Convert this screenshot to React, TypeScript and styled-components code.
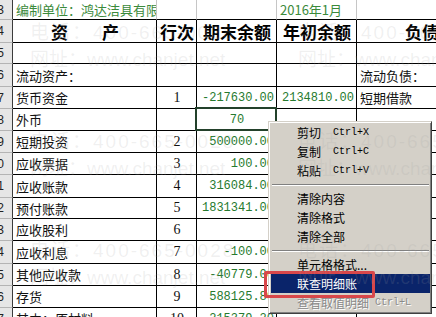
import React from 'react';
import styled, { createGlobalStyle, css } from 'styled-components';

const GlobalStyle = createGlobalStyle`
  html, body {
    margin: 0;
    padding: 0;
    background: #fff;
    overflow: hidden;
  }
  body {
    font-family: "Noto Sans CJK SC", "Liberation Sans", sans-serif;
  }
`;

type Align = 'left' | 'center' | 'right';
type Tone = 'text' | 'head' | 'num' | 'seq' | 'title';

interface Entry {
  label: string;
  seq?: string;
  end?: string;
  begin?: string;
  right?: string;
  selected?: boolean;
}

const ROW_HEIGHTS = [20, 23, 21, 23, 22, 22, 22, 22, 23, 21, 22, 23, 22, 22, 22];

const ENTRIES: Entry[] = [
  { label: '流动资产：', right: '流动负债：' },
  { label: '货币资金', seq: '1', end: '-217630.00', begin: '2134810.00', right: '短期借款' },
  { label: '外币', end: '70', selected: true },
  { label: '短期投资', seq: '2', end: '500000.00' },
  { label: '应收票据', seq: '3', end: '100.00' },
  { label: '应收账款', seq: '4', end: '316084.00' },
  { label: '预付账款', seq: '5', end: '1831341.00' },
  { label: '应收股利', seq: '6' },
  { label: '应收利息', seq: '7', end: '-100.00' },
  { label: '其他应收款', seq: '8', end: '-40779.00' },
  { label: '存货', seq: '9', end: '588125.80' },
  { label: '其中：原材料', seq: '10', end: '215379.20' },
];

const MENU = [
  { label: '剪切', key: 'Ctrl+X', gap: 12 },
  { label: '复制', key: 'Ctrl+C', gap: 12 },
  { label: '粘贴', key: 'Ctrl+V', gap: 12 },
  { sep: true },
  { label: '清除内容' },
  { label: '清除格式' },
  { label: '清除全部' },
  { sep: true },
  { label: '单元格格式...' },
  { label: '联查明细账', active: true },
  { label: '查看取值明细', key: 'Ctrl+L', gap: 6, disabled: true },
];

const WATERMARKS = [19, 128, 237].flatMap((y) => [30, 298].map((x) => ({ x, y })));

const Screen = styled.div`
  position: relative;
  width: 436px;
  height: 317px;
  overflow: hidden;
  background: #fff;
`;

const Sheet = styled.div`
  display: flex;
  flex-direction: column;
  width: 487px;
`;

const Row = styled.div<{ $h: number }>`
  display: grid;
  grid-template-columns: 13px 144px 40px 80px 80px 130px;
  height: ${(p) => p.$h}px;
`;

const RowHead = styled.div`
  box-sizing: border-box;
  display: flex;
  align-items: center;
  justify-content: flex-end;
  padding-right: 8px;
  overflow: hidden;
  white-space: nowrap;
  background: #e6e6e6;
  border-right: 1px solid #3c3c3c;
  border-bottom: 1px solid #b4b4b4;
  font: 12px "Liberation Sans", sans-serif;
  color: #222;
`;

const toneStyles = {
  text: css`
    font-size: 13px;
    color: #111;
  `,
  head: css`
    font-size: 17px;
    font-weight: 700;
    color: #000;
  `,
  num: css`
    font: 12px "Liberation Mono", monospace;
    color: #267a2e;
  `,
  seq: css`
    font: 14px "Liberation Serif", serif;
    color: #111;
  `,
  title: css`
    font-size: 13px;
    color: #3b8a3b;
  `,
};

const justify = { left: 'flex-start', center: 'center', right: 'flex-end' };

const Cell = styled.div<{ $align?: Align; $tone?: Tone; $soft?: boolean; $selected?: boolean }>`
  box-sizing: border-box;
  position: relative;
  display: flex;
  align-items: center;
  justify-content: ${(p) => justify[p.$align || 'left']};
  padding: 0 2px 0 3px;
  white-space: nowrap;
  overflow: ${(p) => (p.$selected ? 'visible' : 'hidden')};
  border-right: 1px solid ${(p) => (p.$soft ? '#c6c6c6' : '#000')};
  border-bottom: 1px solid #000;
  ${(p) => toneStyles[p.$tone || 'text']}

  ${(p) =>
    p.$selected &&
    css`
      &::after {
        content: '';
        position: absolute;
        top: -2px;
        left: -2px;
        right: -1px;
        bottom: -1px;
        border: 2px solid #23412b;
        z-index: 1;
      }
    `}
`;

const Menu = styled.div`
  position: absolute;
  left: 268px;
  top: 121px;
  width: 164px;
  box-sizing: border-box;
  padding: 1px 1px 1px 2px;
  background: #d4d0c8;
  border: 1px solid;
  border-color: #d4d0c8 #404040 #404040 #d4d0c8;
  box-shadow: inset 1px 1px 0 #fff, inset -1px -1px 0 #808080;
  font: 12px "Noto Sans CJK SC", sans-serif;
  z-index: 2;
`;

const MenuItem = styled.div<{ $active?: boolean; $disabled?: boolean }>`
  display: flex;
  align-items: center;
  height: 19px;
  padding-left: 26px;
  white-space: nowrap;
  color: #000;
  ${(p) =>
    p.$active &&
    css`
      background: #0a246a;
      color: #fff;
    `}
  ${(p) =>
    p.$disabled &&
    css`
      color: #8a8a8a;
      text-shadow: 1px 1px 0 #fff;
    `}
`;

const Shortcut = styled.span<{ $gap: number }>`
  margin-left: ${(p) => p.$gap}px;
  font: 10px "Liberation Mono", monospace;
`;

const Separator = styled.div`
  height: 0;
  margin: 4px 1px 3px;
  border-top: 1px solid #808080;
  border-bottom: 1px solid #fff;
`;

const Callout = styled.div`
  position: absolute;
  left: 264px;
  top: 271px;
  width: 111px;
  height: 27px;
  box-sizing: border-box;
  border: 3px solid #d8474a;
  border-radius: 2px;
  z-index: 3;
`;

const Watermark = styled.div`
  position: absolute;
  inset: 0;
  pointer-events: none;
  z-index: 4;
`;

const Mark = styled.div`
  position: absolute;
  font-family: "Liberation Sans", "Noto Sans CJK SC", sans-serif;
  font-size: 19px;
  line-height: 27px;
  white-space: nowrap;
  color: rgba(160, 160, 160, 0.16);
`;

const MarkLine = styled.div<{ $spacing: number }>`
  letter-spacing: ${(p) => p.$spacing}px;
`;

const App = () => (
  <Screen>
    <GlobalStyle />
    <Sheet>
      <Row $h={ROW_HEIGHTS[0]}>
        <RowHead>3</RowHead>
        <Cell $soft $tone="title">编制单位：鸿达洁具有限公司</Cell>
        <Cell $soft />
        <Cell $soft />
        <Cell $soft $tone="title">2016年1月</Cell>
        <Cell $soft />
      </Row>
      <Row $h={ROW_HEIGHTS[1]}>
        <RowHead>4</RowHead>
        <Cell $tone="head" $align="center">资　　产</Cell>
        <Cell $tone="head" $align="center">行次</Cell>
        <Cell $tone="head" $align="center">期末余额</Cell>
        <Cell $tone="head" $align="center">年初余额</Cell>
        <Cell $tone="head" $align="center">负债</Cell>
      </Row>
      <Row $h={ROW_HEIGHTS[2]}>
        <RowHead>5</RowHead>
        <Cell />
        <Cell />
        <Cell />
        <Cell />
        <Cell />
      </Row>
      {ENTRIES.map((e, i) => (
        <Row key={e.label} $h={ROW_HEIGHTS[i + 3]}>
          <RowHead>{i + 6}</RowHead>
          <Cell>{e.label}</Cell>
          <Cell $tone="seq" $align="center">{e.seq}</Cell>
          <Cell $tone="num" $align={e.selected ? 'center' : 'right'} $selected={e.selected}>
            {e.end}
          </Cell>
          <Cell $tone="num" $align="right">{e.begin}</Cell>
          <Cell>{e.right}</Cell>
        </Row>
      ))}
    </Sheet>

    <Menu>
      {MENU.map((m, i) =>
        m.sep ? (
          <Separator key={i} />
        ) : (
          <MenuItem key={i} $active={m.active} $disabled={m.disabled}>
            <span>{m.label}</span>
            {m.key && <Shortcut $gap={m.gap || 0}>{m.key}</Shortcut>}
          </MenuItem>
        )
      )}
    </Menu>
    <Callout />

    <Watermark>
      {WATERMARKS.map((w) => (
        <Mark key={`${w.x}-${w.y}`} style={{ left: w.x, top: w.y }}>
          <MarkLine $spacing={2}>电话：400-665-0028</MarkLine>
          <MarkLine $spacing={0}>网址：www.chanjet.net</MarkLine>
        </Mark>
      ))}
    </Watermark>
  </Screen>
);

export default App;
